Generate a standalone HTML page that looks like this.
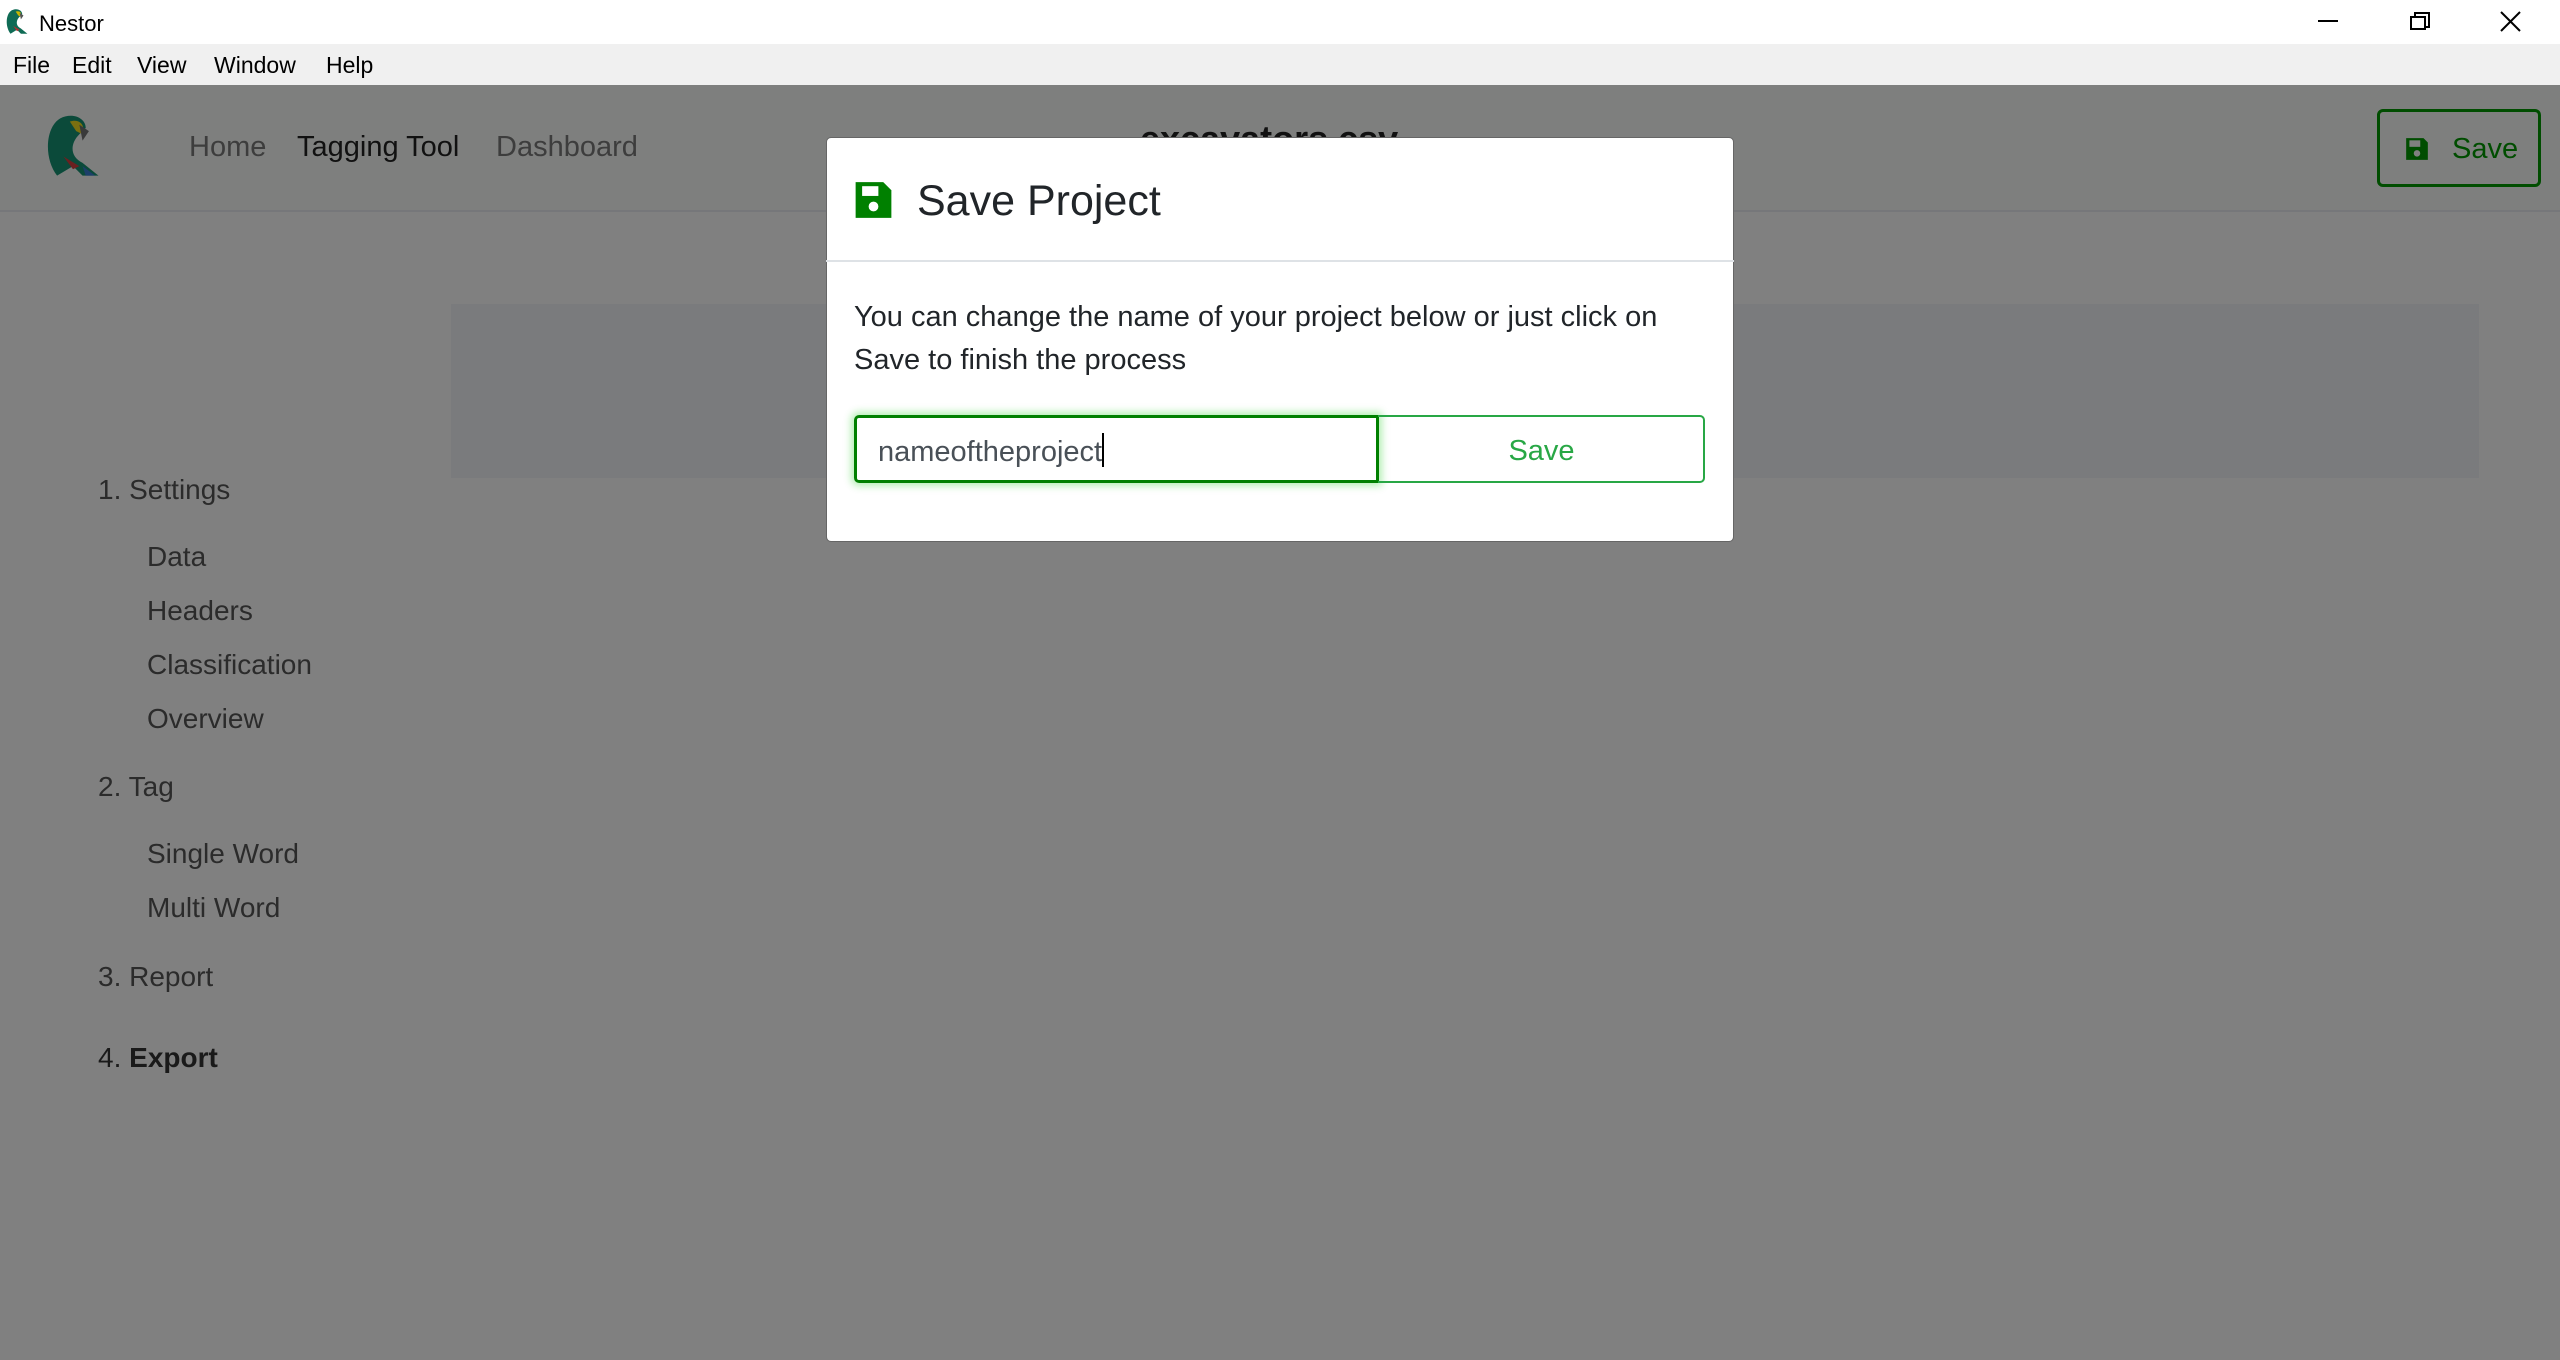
<!DOCTYPE html>
<html><head><meta charset="utf-8">
<style>
*{margin:0;padding:0;box-sizing:border-box}
body{width:2560px;height:1360px;overflow:hidden;background:#808080;font-family:"Liberation Sans",sans-serif;position:relative}
.a{position:absolute;white-space:nowrap}
</style></head><body>
<!-- title bar -->
<div class="a" style="left:0;top:0;width:2560px;height:44px;background:#fff"></div>
<svg class="a" style="left:4px;top:7px" width="26" height="30" viewBox="0 0 40 44"><path d="M10 40 C2 30 2 10 12 4 C20 0 28 4 28 10 L24 14 C18 20 18 28 26 32 L36 40 L26 40 L20 34 Z" fill="#0f6b55"/><path d="M18 6 C24 4 28 8 26 14 L22 12 Z" fill="#c9b800"/><path d="M24 8 L30 12 L26 18 Z" fill="#555"/><path d="M14 28 L24 34 L20 36 Z" fill="#b03030"/></svg>
<div class="a" style="left:39px;top:11px;font-size:22px;color:#000">Nestor</div>
<div class="a" style="left:2318px;top:20px;width:20px;height:2px;background:#000"></div>
<div class="a" style="left:2414px;top:12px;width:16px;height:16px;border:2px solid #000;background:#fff"></div>
<div class="a" style="left:2410px;top:16px;width:16px;height:14px;border:2px solid #000;background:#fff"></div>
<svg class="a" style="left:2500px;top:11px" width="21" height="21"><path d="M1 1L20 20M20 1L1 20" stroke="#000" stroke-width="2"/></svg>
<!-- menu -->
<div class="a" style="left:0;top:44px;width:2560px;height:41px;background:#f0f0f0"></div>
<div class="a" style="left:13px;top:52px;font-size:23px;color:#000">File</div>
<div class="a" style="left:72px;top:52px;font-size:23px;color:#000">Edit</div>
<div class="a" style="left:137px;top:52px;font-size:23px;color:#000">View</div>
<div class="a" style="left:214px;top:52px;font-size:23px;color:#000">Window</div>
<div class="a" style="left:326px;top:52px;font-size:23px;color:#000">Help</div>
<!-- header -->
<div class="a" style="left:0;top:85px;width:2560px;height:127px;background:#7e7f7e;border-bottom:2px solid #76777a"></div>
<svg class="a" style="left:38px;top:112px" width="70" height="70" viewBox="0 0 40 44"><path d="M10 40 C2 30 2 10 12 4 C20 0 28 4 28 10 L24 14 C18 20 18 28 26 32 L36 40 L26 40 L20 34 Z" fill="#0b4a3a"/><path d="M18 6 C24 4 28 8 26 14 L22 12 Z" fill="#7a6f10"/><path d="M24 8 L30 12 L26 18 Z" fill="#3a3a3a"/><path d="M14 28 L24 34 L20 36 Z" fill="#6b2020"/><path d="M26 34 L34 40 L28 40 Z" fill="#1c3f6a"/></svg>
<div class="a" style="left:189px;top:131px;font-size:29px;color:#3d3d3d">Home</div>
<div class="a" style="left:297px;top:131px;font-size:29px;color:#111">Tagging Tool</div>
<div class="a" style="left:496px;top:131px;font-size:29px;color:#3d3d3d">Dashboard</div>
<div class="a" style="left:1140px;top:118px;font-size:36px;font-weight:bold;color:#111">excavators.csv</div>
<div class="a" style="left:2377px;top:109px;width:164px;height:78px;border:3px solid #004d00;border-radius:6px"></div>
<svg class="a" style="left:2404px;top:136px" width="26" height="26" viewBox="0 0 24 24"><path d="M2 2h16l4 4v16H2z" fill="#004d00"/><rect x="5" y="4" width="10" height="6" fill="#808080"/><circle cx="12" cy="16" r="3" fill="#808080"/></svg>
<div class="a" style="left:2452px;top:133px;font-size:29px;color:#004d00">Save</div>
<!-- content box -->
<div class="a" style="left:451px;top:304px;width:2028px;height:174px;background:#7a7b7d"></div>
<!-- sidebar -->
<div class="a" style="left:98px;top:473px;font-size:28px;color:#2b2b2b;line-height:34px">1. Settings</div>
<div class="a" style="left:147px;top:541px;font-size:28px;color:#2b2b2b">Data</div>
<div class="a" style="left:147px;top:595px;font-size:28px;color:#2b2b2b">Headers</div>
<div class="a" style="left:147px;top:649px;font-size:28px;color:#2b2b2b">Classification</div>
<div class="a" style="left:147px;top:703px;font-size:28px;color:#2b2b2b">Overview</div>
<div class="a" style="left:98px;top:771px;font-size:28px;color:#2b2b2b">2. Tag</div>
<div class="a" style="left:147px;top:838px;font-size:28px;color:#2b2b2b">Single Word</div>
<div class="a" style="left:147px;top:892px;font-size:28px;color:#2b2b2b">Multi Word</div>
<div class="a" style="left:98px;top:961px;font-size:28px;color:#2b2b2b">3. Report</div>
<div class="a" style="left:98px;top:1042px;font-size:28px;color:#1a1a1a">4. <b>Export</b></div>
<!-- modal -->
<div class="a" style="left:826px;top:137px;width:908px;height:405px;background:#fff;border-radius:5px;border:1px solid #666"></div>
<div class="a" style="left:826px;top:260px;width:908px;height:2px;background:#dee2e6"></div>
<svg class="a" style="left:854px;top:180px" width="39" height="40" viewBox="0 0 24 24"><path d="M1 1h17l5 5v17H1z" fill="#008000"/><rect x="5" y="3.5" width="10" height="6" fill="#fff"/><circle cx="12" cy="16" r="3" fill="#fff"/></svg>
<div class="a" style="left:917px;top:177px;font-size:43px;color:#212529">Save Project</div>
<div class="a" style="left:854px;top:296px;font-size:29px;color:#212529;line-height:43px;white-space:normal;width:840px">You can change the name of your project below or just click on Save to finish the process</div>
<div class="a" style="left:854px;top:415px;width:525px;height:68px;border:3px solid #008000;border-radius:5px 0 0 5px;box-shadow:0 0 8px 3px rgba(0,200,0,.3)"></div>
<div class="a" style="left:878px;top:433px;font-size:29px;color:#495057">nameoftheproject<span style="display:inline-block;width:2px;height:34px;background:#000;vertical-align:-6px"></span></div>
<div class="a" style="left:1378px;top:415px;width:327px;height:68px;border:2px solid #28a745;border-left:none;border-radius:0 5px 5px 0"></div>
<div class="a" style="left:1378px;top:435px;width:327px;text-align:center;font-size:29px;color:#28a745">Save</div>
</body></html>
